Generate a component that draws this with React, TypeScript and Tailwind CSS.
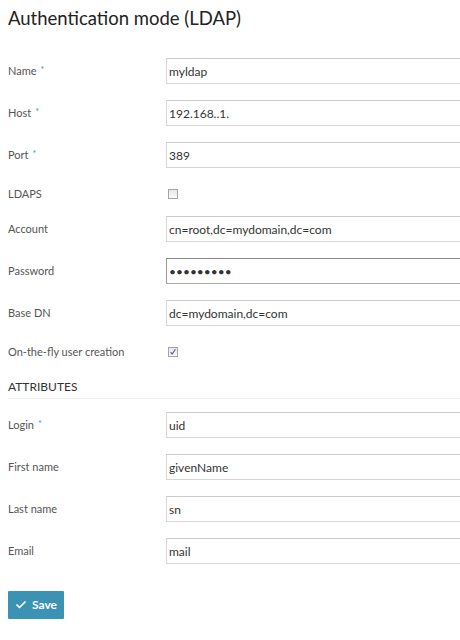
import { Check } from "lucide-react";

type Field = {
    label: string;
    value?: string;
    required?: boolean;
    kind?: "text" | "password" | "checkbox";
    checked?: boolean;
};

const SERVER: Field[] = [
    { label: "Name", value: "myldap", required: true },
    { label: "Host", value: "192.168..1.", required: true },
    { label: "Port", value: "389", required: true },
    { label: "LDAPS", kind: "checkbox" },
    { label: "Account", value: "cn=root,dc=mydomain,dc=com" },
    { label: "Password", value: "secretpwd", kind: "password" },
    { label: "Base DN", value: "dc=mydomain,dc=com" },
    { label: "On-the-fly user creation", kind: "checkbox", checked: true },
];

const ATTRIBUTES: Field[] = [
    { label: "Login", value: "uid", required: true },
    { label: "First name", value: "givenName" },
    { label: "Last name", value: "sn" },
    { label: "Email", value: "mail" },
];

function Row({ f, first }: { f: Field; first?: boolean }) {
    const isBox = f.kind === "checkbox";
    return (
        <div className={`flex items-center ${first ? "" : "mt-[16px]"} ${isBox ? "h-[16px] translate-y-[2px]" : "h-[26px]"}`}>
            <label className="w-[158px] shrink-0 text-[11px] text-[#555]">
                {f.label}
                {f.required && <span className="ml-[4px] text-[#3d96b8] text-[9px] align-top">*</span>}
            </label>
            {isBox ? (
                <span className="ml-[2px] w-[10px] h-[10px] border border-[#a5a5a5] bg-gradient-to-b from-[#e8e8e8] to-[#fafafa] flex items-center justify-center">
                    {f.checked && (
                        <svg viewBox="0 0 10 10" className="w-[8px] h-[8px]">
                            <path d="M2 5.2 L4 7.5 L8 1.5" fill="none" stroke="#4a5f9a" strokeWidth="1.4" />
                        </svg>
                    )}
                </span>
            ) : (
                <input
                    type={f.kind === "password" ? "password" : "text"}
                    defaultValue={f.value}
                    className={`w-[310px] h-[26px] shrink-0 px-[2px] text-[12px] text-[#333] bg-white outline-none border ${
                        f.kind === "password"
                            ? "border-[#aaa] border-t-[#888] border-l-[#999]"
                            : "border-[#d6d6d6] border-t-[#ccc]"
                    }`}
                    style={{ fontFamily: "Lato, 'Liberation Sans', sans-serif" }}
                />
            )}
        </div>
    );
}

export default function App() {
    return (
        <div className="w-[460px] h-[640px] overflow-hidden bg-white px-2" style={{ fontFamily: "Lato, 'Liberation Sans', sans-serif" }}>
            <h1 className="pt-[7px] text-[18.5px] leading-[22px] text-[#222] mb-[29px]">Authentication mode (LDAP)</h1>

            {SERVER.map((f, i) => (
                <Row key={f.label} f={f} first={i === 0} />
            ))}

            <h2 className="mt-[20px] -mr-2 pb-[3px] text-[12px] leading-[17px] uppercase text-[#333] border-b border-[#eee] mb-[13px]">Attributes</h2>

            {ATTRIBUTES.map((f, i) => (
                <Row key={f.label} f={f} first={i === 0} />
            ))}

            <button className="mt-[27px] w-[56px] h-[28px] flex items-center justify-center gap-[5px] bg-[#3b92b4] text-white text-[12px] font-bold rounded-[1px]">
                <Check className="w-[12px] h-[12px]" strokeWidth={3.5} />
                Save
            </button>
        </div>
    );
}
